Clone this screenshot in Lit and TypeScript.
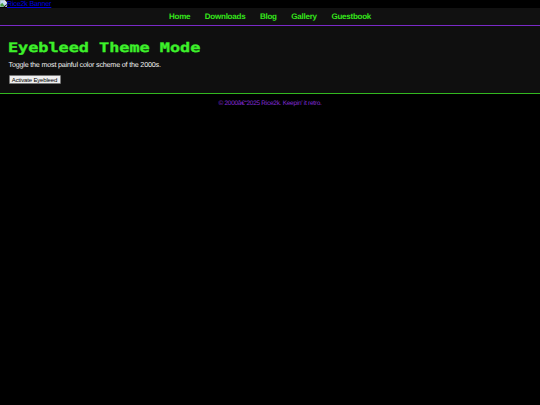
import { LitElement, html, css } from 'lit';
import { customElement, property } from 'lit/decorators.js';

@customElement('banner-link')
export class BannerLink extends LitElement {
  static styles = css`
    :host {
      display: block;
      height: 8px;
      overflow: hidden;
    }

    .banner {
      display: flex;
      color: #0000e0;
      font-size: 7.2px;
      letter-spacing: -0.22px;
      line-height: 7px;
      text-decoration: underline;
    }

    .icon {
      width: 7px;
      height: 7px;
      flex: none;
    }
  `;

  render() {
    return html`
      <a class="banner" href="#">
        <svg class="icon" viewBox="0 0 16 16">
          <path d="M0 0h11l5 5v4L7 16H0z" fill="#a9b0b5"/>
          <path d="M1 1h9v5h5v3l-8 6H1z" fill="#c5dcf5"/>
          <path d="M1 14v-4l4-4 5 7-3 2H1z" fill="#49a047"/>
          <path d="M10 0v6h6z" fill="#f4f4f4"/>
          <path d="M10 16l6-5v5z" fill="#a9b0b5"/>
        </svg>
        <span>Rice2k Banner</span>
      </a>
    `;
  }
}

@customElement('nav-bar')
export class NavBar extends LitElement {
  static styles = css`
    :host {
      display: block;
    }

    .nav {
      display: flex;
      justify-content: center;
      gap: 14.6px;
      height: 17px;
      line-height: 17px;
      background: #111;
      border-bottom: 1px solid #7a2ac8;
    }

    .link {
      color: #35e61b;
      font-size: 8px;
      font-weight: bold;
      letter-spacing: -0.24px;
      text-decoration: none;
    }
  `;

  @property({ type: Array }) links: string[] = [];

  render() {
    return html`
      <nav class="nav">
        ${this.links.map(link => html`<a class="link" href="#">${link}</a>`)}
      </nav>
    `;
  }
}

@customElement('app-root')
export class AppRoot extends LitElement {
  static styles = css`
    :host {
      display: block;
      height: 100vh;
      overflow: hidden;
      background: #000;
      color: #f0f0f0;
      font-family: 'Liberation Sans', Arial, sans-serif;
      text-rendering: geometricPrecision;
    }

    .main {
      box-sizing: border-box;
      height: 68px;
      padding: 15px 8.5px 0;
      background: #0f0f0f;
      border-bottom: 1px solid #33b820;
    }

    .title {
      width: max-content;
      margin: 0 0 0 -0.5px;
      color: #3df02a;
      font-family: 'DejaVu Sans Mono', monospace;
      font-size: 13.2px;
      font-weight: bold;
      line-height: 16px;
      transform: scaleX(1.275);
      transform-origin: left;
      -webkit-text-stroke: 0.35px #3df02a;
    }

    .text {
      margin: 4px 0 0;
      font-size: 7.2px;
      letter-spacing: -0.2px;
      line-height: 8px;
    }

    .button {
      display: block;
      box-sizing: border-box;
      width: 52px;
      height: 9px;
      margin: 6px 0 0;
      padding: 0;
      border: 0.5px solid #777;
      border-radius: 1px;
      background: #efefef;
      color: #000;
      font-family: inherit;
      font-size: 6px;
      letter-spacing: -0.16px;
      line-height: 8px;
      white-space: nowrap;
    }

    .footer {
      padding-top: 6px;
      color: #842bd8;
      font-size: 6.5px;
      letter-spacing: -0.27px;
      line-height: 7px;
      text-align: center;
    }
  `;

  links = ['Home', 'Downloads', 'Blog', 'Gallery', 'Guestbook'];

  render() {
    return html`
      <banner-link></banner-link>
      <nav-bar .links=${this.links}></nav-bar>
      <main class="main">
        <h1 class="title">Eyebleed Theme Mode</h1>
        <p class="text">Toggle the most painful color scheme of the 2000s.</p>
        <button class="button">Activate Eyebleed</button>
      </main>
      <footer class="footer">© 2000â€“2025 Rice2k. Keepin’ it retro.</footer>
    `;
  }
}
